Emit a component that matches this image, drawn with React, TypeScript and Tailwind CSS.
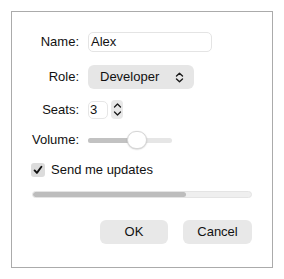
import React from "react";

function UpDown({ w = 9, h = 11 }: { w?: number; h?: number }) {
  return (
    <svg width={w} height={h} viewBox="0 0 9 11" fill="none" stroke="#1a1a1a" strokeWidth="1.4" strokeLinecap="round" strokeLinejoin="round">
      <path d="M1.5 4 L4.5 1.2 L7.5 4" />
      <path d="M1.5 7 L4.5 9.8 L7.5 7" />
    </svg>
  );
}

export default function App() {
  return (
    <div className="p-[11px] bg-white" style={{ fontFamily: '"Liberation Sans", Arial, sans-serif' }}>
      <div className="h-[257px] border border-[#ababab] bg-white pl-[20px] pr-[19px] pt-[20px] text-[13px] text-[#111]">
        {/* Name */}
        <div className="flex items-center h-[20px]">
          <div className="w-[47px] text-right">Name:</div>
          <div className="ml-[9px] w-[124px] h-[20px] border border-[#e4e4e4] rounded-[5px] flex items-center pl-[2px] bg-white">
            Alex
          </div>
        </div>
        {/* Role */}
        <div className="flex items-center h-[24px] mt-[13px]">
          <div className="w-[47px] text-right">Role:</div>
          <div className="ml-[9px] w-[106px] h-[24px] bg-[#e6e6e6] rounded-[6px] flex items-center pl-[12px] pr-[10px] justify-between">
            <span>Developer</span>
            <UpDown />
          </div>
        </div>
        {/* Seats */}
        <div className="flex items-center h-[19px] mt-[11px]">
          <div className="w-[47px] text-right">Seats:</div>
          <div className="ml-[9px] w-[20px] h-[18px] border border-[#e6e6e6] rounded-[5px] flex items-center pl-[1px] bg-white">
            3
          </div>
          <div className="ml-[3px] w-[12px] h-[19px] bg-[#e8e8e8] rounded-[4px] flex items-center justify-center">
            <svg width="9" height="15" viewBox="0 0 9 15" fill="none" stroke="#1a1a1a" strokeWidth="1.3" strokeLinecap="round" strokeLinejoin="round">
              <path d="M1.5 5 L4.5 2 L7.5 5" />
              <path d="M1.5 10 L4.5 13 L7.5 10" />
            </svg>
          </div>
        </div>
        {/* Volume */}
        <div className="flex items-center h-[20px] mt-[11px]">
          <div className="w-[47px] text-right">Volume:</div>
          <div className="ml-[9px] w-[84px] h-[20px] relative flex items-center">
            <div className="w-full h-[5px] rounded-full bg-[#e6e6e6] overflow-hidden">
              <div className="h-full w-[48px] bg-[#c2c2c2]" />
            </div>
            <div className="absolute left-[39px] top-[1px] w-[20px] h-[18px] rounded-full bg-white border border-[#d6d6d6] shadow-[0_0.5px_1.5px_rgba(0,0,0,0.2)]" />
          </div>
        </div>
        {/* Checkbox */}
        <div className="flex items-center h-[14px] mt-[13px] -ml-[1px]">
          <div className="w-[14px] h-[14px] rounded-[3px] bg-[#dcdcdc] flex items-center justify-center">
            <svg width="10" height="10" viewBox="0 0 10 10" fill="none" stroke="#111" strokeWidth="1.9" strokeLinecap="round" strokeLinejoin="round">
              <path d="M1.6 5.4 L3.9 7.9 L8.4 1.8" />
            </svg>
          </div>
          <span className="ml-[6px]">Send me updates</span>
        </div>
        {/* Progress */}
        <div className="mt-[14px] h-[7px] w-[220px] rounded-full bg-[#efefef] border border-[#e4e4e4] overflow-hidden">
          <div className="h-full w-[70%] bg-[#bdbdbd] rounded-full" />
        </div>
        {/* Buttons */}
        <div className="mt-[22px] flex justify-end gap-[15px] w-[220px]">
          <div className="w-[68px] h-[24px] rounded-[6px] bg-[#e8e8e8] flex items-center justify-center">OK</div>
          <div className="w-[69px] h-[24px] rounded-[6px] bg-[#e8e8e8] flex items-center justify-center">Cancel</div>
        </div>
      </div>
    </div>
  );
}
